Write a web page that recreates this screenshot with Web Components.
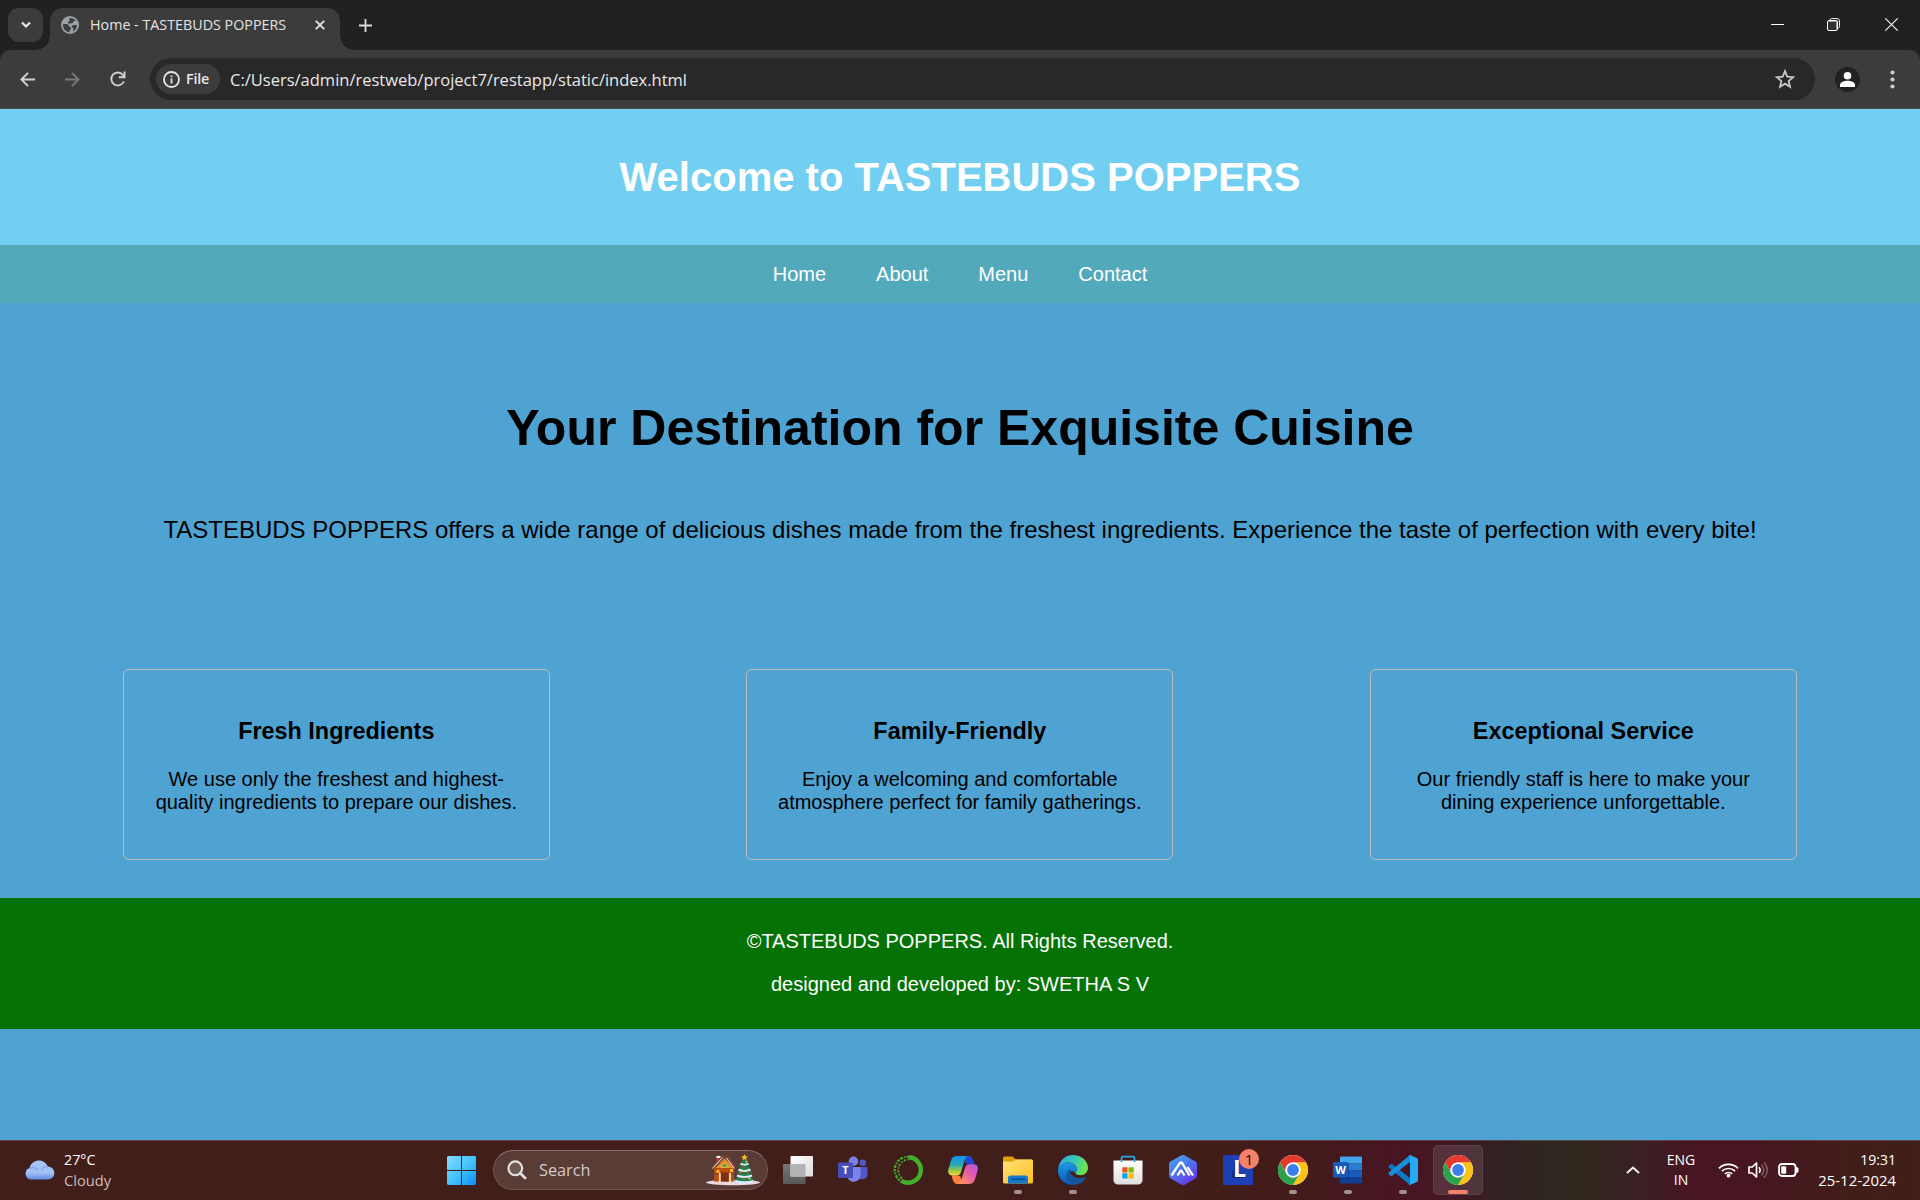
<!DOCTYPE html>
<html lang="en"><head><meta charset="utf-8"><title>Home - TASTEBUDS POPPERS</title>
<style>
html,body{margin:0;height:1200px;overflow:hidden;background:#4fa3d2}
body{display:flex;flex-direction:column;font-family:"Liberation Sans",Arial,sans-serif}
site-page{flex:1}
</style></head>
<body>
<browser-chrome></browser-chrome>
<site-page>
  <site-header>Welcome to TASTEBUDS POPPERS</site-header>
  <site-nav><span>Home</span><span>About</span><span>Menu</span><span>Contact</span></site-nav>
  <hero-banner><span slot="title">Your Destination for Exquisite Cuisine</span>TASTEBUDS POPPERS offers a wide range of delicious dishes made from the freshest ingredients. Experience the taste of perfection with every bite!</hero-banner>
  <feature-row>
    <feature-card><span slot="title">Fresh Ingredients</span>We use only the freshest and highest-<br>quality ingredients to prepare our dishes.</feature-card>
    <feature-card><span slot="title">Family-Friendly</span>Enjoy a welcoming and comfortable<br>atmosphere perfect for family gatherings.</feature-card>
    <feature-card><span slot="title">Exceptional Service</span>Our friendly staff is here to make your<br>dining experience unforgettable.</feature-card>
  </feature-row>
  <site-footer><span>©TASTEBUDS POPPERS. All Rights Reserved.</span><span>designed and developed by: SWETHA S V</span></site-footer>
</site-page>
<task-bar></task-bar>
<script>
const chromeLogo = `<circle cx="15" cy="15" r="15" fill="#fff"/>
<path fill="#e33b2e" d="M2 7.500A15 15 0 0 1 28 7.500H15A7.500 7.500 0 0 0 8.500 18.750z"/>
<path fill="#fbc116" d="M28 7.500A15 15 0 0 1 15 30L21.500 18.750A7.500 7.500 0 0 0 15 7.500z"/>
<path fill="#2da24c" d="M15 30A15 15 0 0 1 2 7.500L8.500 18.750A7.500 7.500 0 0 0 21.500 18.750z"/>
<circle cx="15" cy="15" r="7.500" fill="#fff"/><circle cx="15" cy="15" r="5.900" fill="#3b7de9"/>`;

/* name: [width, height, markup] */
const ICONS = {
  chevron:[12,8,`<path d="M2 1.500l4 4 4-4" fill="none" stroke="#e8e8e8" stroke-width="2.200"/>`],
  globe:[18,18,`<circle cx="9" cy="9" r="9" fill="#9aa0a6"/><path d="M2 8.200c2.600-.3 5.600-.2 6 1.700.3 1.500 2 .6 2.200 2.100.2 1.300-1.200 1.500-1.400 2.600-.2.700-.3 1.200-.3 1.700C5 16 1.800 12.800 2 8.200zM8.500 2.200c2.500-.4 4.700.8 6.200 2.800-1.500-.1-2.500.2-2.800 1.500-.4 1.500-2.300.3-3.300 1C8 8.200 7.300 7.800 7 7 6.700 6 7.700 5.800 8.300 5.300 9 4.600 8 3.500 8.500 2.200zM11 9.600c1.600-1 3.600-.6 5-.4-.2 3-1.800 5-4 6.200.4-1.600.6-2.300 0-3.200-.6-.8-1.500-1.800-1-2.600z" fill="#3c3c3c"/>`],
  close:[10,10,`<path d="M.8.8l8.400 8.400M9.200.8L.8 9.200" stroke="#e6e6e6" stroke-width="1.800"/>`],
  plus:[13,13,`<path d="M6.500 0v13M0 6.500h13" stroke="#dcdcdc" stroke-width="1.800"/>`],
  min:[13,13,`<path d="M0 6.500h13" stroke="#fff"/>`],
  restore:[13,13,`<path d="M3 2.500V2A1.500 1.500 0 0 1 4.500.5H10A2.500 2.500 0 0 1 12.500 3v5.500A1.500 1.500 0 0 1 11 10" fill="none" stroke="#e8e8e8"/><rect x=".5" y="2.500" width="10" height="10" rx="1.500" fill="#303232" stroke="#fff"/><path d="M2 3.500h7.500V11" fill="none" stroke="#999"/>`],
  winclose:[13,13,`<path d="M.3.3l12.400 12.400M12.700.3L.3 12.700" stroke="#f4f4f4" stroke-width="1.200"/>`],
  back:[15,15,`<path d="M15 7.500H1.500M8 .8L1.400 7.500 8 14.200" fill="none" stroke="#d2d2d2" stroke-width="1.900"/>`],
  fwd:[15,15,`<path d="M0 7.500h13.500M7 .8l6.600 6.700L7 14.200" fill="none" stroke="#777" stroke-width="1.900"/>`],
  reload:[16,16,`<path d="M13.800 10.500A6.500 6.500 0 1 1 12.800 3.800L14.500 6" fill="none" stroke="#d2d2d2" stroke-width="1.900"/><path d="M14.500.5V6.300H8.800" fill="none" stroke="#d2d2d2" stroke-width="1.900"/>`],
  info:[17,17,`<circle cx="8.500" cy="8.500" r="7.500" fill="none" stroke="#e6e6e6" stroke-width="1.800"/><path d="M8.500 7.500v5M8.500 4.400v1.800" stroke="#e6e6e6" stroke-width="1.800"/>`],
  star:[20,20,`<path d="M10 2.200l2.250 5.450 5.900.48-4.500 3.850 1.380 5.750L10 14.650l-5.030 3.080 1.380-5.750-4.500-3.850 5.900-.48z" fill="none" stroke="#c8c8c8" stroke-width="1.800"/>`],
  profile:[25,25,`<circle cx="12.500" cy="12.500" r="12.500" fill="#202222"/><circle cx="12.500" cy="8.700" r="3.800" fill="#fff"/><path d="M5 20v-2c0-3 4.500-4.300 7.500-4.300S20 15 20 18v2z" fill="#fff"/>`],
  dots:[5,19,`<g fill="#ccc"><circle cx="2.500" cy="2.500" r="2.100"/><circle cx="2.500" cy="9.500" r="2.100"/><circle cx="2.500" cy="16.500" r="2.100"/></g>`],
  cloud:[31,20,`<defs><linearGradient id="a" x2="0" y2="1"><stop stop-color="#a6c7fa"/><stop offset=".65" stop-color="#a0bff5"/><stop offset="1" stop-color="#5f8ee2"/></linearGradient></defs><path d="M6.500 19.500A6 6 0 0 1 5.500 8C7 2.500 11 .5 15 .5S22.300 3 23.800 6.500A6.500 6.500 0 0 1 24 19.500z" fill="url(#a)"/><path d="M5.500 8.500c3-1.800 7-1 8.500 1.500M17.500 10.500c1-2.500 3.500-4.300 6.500-4" fill="none" stroke="#6e98e6" stroke-width="1.300" opacity=".7"/>`],
  windows:[29,30,`<defs><linearGradient id="w" gradientUnits="userSpaceOnUse" x1="0" y1="0" x2="30" y2="30"><stop stop-color="#86dcff"/><stop offset=".5" stop-color="#44c4fb"/><stop offset="1" stop-color="#0b8bf7"/></linearGradient></defs><path fill="url(#w)" d="M1 1h13v14H0V2zM15 1h13l1 1v13H15zM0 16h14v14H1l-1-1zM15 16h14v13l-1 1H15z"/>`],
  search:[20,20,`<circle cx="8.300" cy="8.300" r="6.900" fill="#8a7774" fill-opacity=".45" stroke="#e3dedd" stroke-width="2.200"/><path d="M13.300 13.300l4.800 4.800" stroke="#e3dedd" stroke-width="2.800" stroke-linecap="round"/>`],
  holiday:[54,32,`<ellipse cx="27" cy="28.500" rx="27" ry="2.800" fill="#ead8df"/><path d="M8 13h20v14.500H8z" fill="#b7500f"/><path d="M8 20h20" stroke="#83320d" stroke-width="1"/><path d="M10.500 2.500h3v7h-3z" fill="#c8322f"/><path d="M10.500 2h4v2h-4z" fill="#fff"/><path d="M18.500 4L28 14H9.500z" fill="#e8892b"/><path d="M7 13.500L17 3l5 0 7 10.500" fill="none" stroke="#744034" stroke-width="3"/><path d="M6.500 14.500L16.500 3.500M20.500 4l7.800 10.500" fill="none" stroke="#e9cfd0" stroke-width="1.100"/><path d="M14.500 13l4-4 4 4z" fill="#3e9c3b" stroke="#ffd34e" stroke-width=".7"/><path d="M15 18.500h7.500v9H15z" fill="#7c2f12"/><path d="M13.800 28v-9M24 28v-9" stroke="#f5deb6" stroke-width="1.800"/><path d="M10.500 16h3v3h-3zM24 15h3v3h-3z" fill="#ffb32f"/><path d="M38.500 3l5.500 9h-2l4 7h-2l4 8.500h-19L33 19h-2l4-7h-2z" fill="#217e49"/><path d="M34.500 9.500q4 2.500 8 0M32.500 15.500q6 3 12 0M31 21.500q7.500 3 15 0M29.500 27q9 3 18 0" fill="none" stroke="#dceaff" stroke-width="2"/><path d="M38.500 0l1 2.200 2.300.2-1.700 1.600.5 2.300-2.100-1.200-2.100 1.200.5-2.300-1.700-1.600 2.300-.2z" fill="#ffbc28"/><g fill="#f2453e"><circle cx="37" cy="12" r="1"/><circle cx="42" cy="18" r="1"/><circle cx="34" cy="19" r="1"/><circle cx="38" cy="24.500" r="1"/></g><g fill="#ffd445"><circle cx="40.500" cy="7.500" r=".9"/><circle cx="37" cy="17" r=".9"/><circle cx="43.500" cy="24.500" r="1"/></g>`],
  taskview:[30,28,`<defs><linearGradient id="t1" x2="1" y2="1"><stop stop-color="#fff"/><stop offset="1" stop-color="#ddd"/></linearGradient><linearGradient id="t2" x2="0" y2="1"><stop stop-color="#777"/><stop offset="1" stop-color="#585858"/></linearGradient></defs><rect y="8" width="22.500" height="20" rx="1" fill="url(#t2)"/><rect x="7.500" width="22.500" height="20.500" rx="1" fill="url(#t1)"/><path d="M7.500 8h15v12.500h-15z" fill="#b3b3b3"/>`],
  teams:[30,28,`<circle cx="24.700" cy="6.800" r="3.200" fill="#5059c9"/><path d="M20 11h8.500a1 1 0 0 1 1 1v6.500a5 5 0 0 1-9.500 2z" fill="#4f58c6"/><circle cx="15.500" cy="5.200" r="4.700" fill="#7b83eb"/><path d="M10 11h12.500v9a6.800 6.800 0 0 1-13 1.500z" fill="#7b83eb"/><path d="M9 9h6v13H9z" fill="#353c94" opacity=".5"/><rect y="6.500" width="15" height="15.500" rx="1.200" fill="#474eb9"/><text x="7.500" y="18" text-anchor="middle" font-family="Open Sans,sans-serif" font-weight="700" font-size="11" fill="#fff">T</text>`],
  anaconda:[30,30,`<path d="M16 2.300A12.700 12.700 0 1 1 8.500 25.800" fill="none" stroke="#43b02a" stroke-width="4.400"/><path d="M16 1.800A13.200 13.200 0 0 0 8.500 26.500" fill="none" stroke="#43b02a" stroke-width="2.200" stroke-dasharray="2.400 1.200 1.300 1.400 3 1.100"/><path d="M16 4.400A10.900 10.900 0 0 0 9 23.500" fill="none" stroke="#43b02a" stroke-width="1.800" stroke-dasharray="1.500 1.700 2.200 1.400"/>`],
  copilot:[30,28,`<defs><linearGradient id="c1" x2="0" y2="1"><stop stop-color="#1391ee"/><stop offset=".45" stop-color="#25aab8"/><stop offset=".75" stop-color="#9bc948"/><stop offset="1" stop-color="#ffd53c"/></linearGradient><linearGradient id="c2" x1="1" x2="0" y2="1"><stop stop-color="#a759f0"/><stop offset=".4" stop-color="#e357ad"/><stop offset="1" stop-color="#ff9d57"/></linearGradient></defs><path d="M16 0h4.500c3 0 4 2.200 4.800 4.500l1.200 3.700H20c-3 0-3-3-4-5z" fill="#2347d2"/><path d="M14 28H9.500c-3 0-4-2-4.800-4.500l-1.200-4H10c3 0 3 3 4 5z" fill="#ff803b"/><path d="M9.500 0H20c-2.500 1-3.500 4-4.300 7l-2.500 8.500c-.8 2.900-2 4-5 4H4.500C.5 19.500-.5 16.500.4 13.300L3 4.500C4 1.300 6 0 9.500 0z" fill="url(#c1)"/><path d="M20.500 28H10c2.500-1 3.500-4 4.300-7l2.500-8.500c.8-2.900 2-4.300 5-4.300h3.700c4 0 5 3 4.100 6.200L27 23.500c-1 3.200-3 4.500-6.500 4.500z" fill="url(#c2)"/>`],
  folder:[30,28,`<defs><linearGradient id="f" x2="1" y2="1"><stop stop-color="#ffe27a"/><stop offset="1" stop-color="#fbbd1f"/></linearGradient></defs><path d="M0 2A1.500 1.500 0 0 1 1.500.5h8L13 3.500h15A1.500 1.500 0 0 1 29.500 5v4H0z" fill="#e0a008"/><path d="M0 5.500h10L13 3.500h15.500A1.500 1.500 0 0 1 30 5v21a1.500 1.500 0 0 1-1.500 1.500h-27A1.500 1.500 0 0 1 0 26z" fill="url(#f)"/><path d="M5 27.500V22a2.500 2.500 0 0 1 2.500-2.500h15A2.500 2.500 0 0 1 25 22v5.500z" fill="#1478ce"/><path d="M9 23.300h12.500" stroke="#084b8f" stroke-width="1.500" stroke-linecap="round"/>`],
  edge:[30,30,`<defs><linearGradient id="e1" x2="1" y2=".2"><stop stop-color="#27a5e4"/><stop offset=".6" stop-color="#35c9b6"/><stop offset="1" stop-color="#70e34c"/></linearGradient><linearGradient id="e2" x2="0" y2="1"><stop stop-color="#1b9ae0"/><stop offset="1" stop-color="#0a58b8"/></linearGradient></defs><path d="M.2 13.500C1.500 5.300 7.500 0 15 0c8.500 0 15 6 15 12.800 0 4.500-3.500 7.400-7.500 7.400-3 0-5.200-1-5.200-2.200 0-1 1.500-1.500 1.500-4C18.800 10 14.500 7.500 10 7.500 5.500 7.500 2 10 .2 13.500z" fill="url(#e1)"/><path d="M0 15C.5 10.300 4.500 7.500 10 7.500c5 0 8.800 3 8.800 6.500 0 2.500-1.500 2.500-1.500 4-3-3-8-2-8 3.500 0 4 3 7.500 8 8.200-1 .2-1.700.3-2.300.3C6 30-.5 23 0 15z" fill="url(#e2)"/><path d="M12.500 13.500C5.500 18 7.500 29 17.500 29.700c4.500-.2 8.300-3 10.200-6.700.3-.7-.2-1-.8-.7-3.500 1.500-8 1.300-11-.7-3-2-4.500-5-3.400-8.100z" fill="#15569f"/>`],
  store:[30,30,`<defs><linearGradient id="s" x2="0" y2="1"><stop stop-color="#fff"/><stop offset="1" stop-color="#dedede"/></linearGradient></defs><path d="M8.500 7V2.800A1 1 0 0 1 9.500 1.700h11a1 1 0 0 1 1 1.100V7" fill="none" stroke="#29abe9" stroke-width="1.700"/><path d="M.5 5.500h29V25a4.500 4.500 0 0 1-4.500 4.500H5A4.500 4.500 0 0 1 .5 25z" fill="url(#s)"/><path d="M9.300 12.300h5.200v5.200H9.300z" fill="#f1511b"/><path d="M15.500 12.300h5.200v5.200h-5.200z" fill="#80bb03"/><path d="M9.300 18.300h5.200v5.200H9.300z" fill="#01a3ee"/><path d="M15.500 18.300h5.200v5.200h-5.200z" fill="#feb902"/><path d="M8.500 5.500v1.500M21.500 5.500v1.500" stroke="#1585c8" stroke-width="1.700"/>`],
  hex:[30,30,`<defs><linearGradient id="h" x2=".7" y2="1"><stop stop-color="#4aa7ec"/><stop offset=".5" stop-color="#4d76eb"/><stop offset="1" stop-color="#6b35e8"/></linearGradient></defs><path d="M15 0q1 0 2 .6l10.500 6q1.500.9 1.500 2.600v11.600q0 1.700-1.500 2.600l-10.500 6q-2 1.200-4 0l-10.500-6Q1 22.500 1 20.800V9.200q0-1.700 1.500-2.600l10.500-6Q14 0 15 0z" fill="url(#h)"/><path d="M3.500 20.500L11.800 8.200Q13 6.500 14.200 8.200l7.300 12.300M9.500 20.500l2.500-4q1-1.500 2 0l2.500 4M19.500 12l5.500 8.500" fill="none" stroke="#fff" stroke-width="2.300"/>`],
  ltile:[30,30,`<path fill="#1f3fb4" d="M0 0h30v30H0z"/><path d="M12 5L8.500 23h12.500l2-2H12z" fill="#122a70"/><text x="10" y="22" font-family="Open Sans,sans-serif" font-weight="700" font-size="23" fill="#fff">L</text>`],
  chrome:[30,30,chromeLogo],
  word:[30,28,`<path fill="#41a5ee" d="M7 1.500A1 1 0 0 1 8 .5h20a1 1 0 0 1 1 1v6H7z"/><path fill="#2b7cd3" d="M7 7.500h22v7H7z"/><path fill="#185abd" d="M7 14.500h22v6.500H7z"/><path fill="#103f91" d="M7 21h22v5.500a1 1 0 0 1-1 1H8a1 1 0 0 1-1-1z"/><path d="M7 7h9v16H7z" fill="#0b3276" opacity=".5"/><rect y="6" width="15" height="15.500" rx="1.200" fill="#185abd"/><text x="7.500" y="17.700" text-anchor="middle" font-family="Open Sans,sans-serif" font-weight="700" font-size="11" fill="#fff">W</text>`],
  vscode:[30,30,`<path d="M.6 11.200l2-1.900a1.200 1.200 0 0 1 1.600 0L22 23v7L.7 12.600q-.6-.7-.1-1.400z" fill="#0b79c8"/><path d="M.6 18.900l2 1.900a1.200 1.200 0 0 0 1.600 0L22 7V0L.7 17.500q-.6.700-.1 1.400z" fill="#168fd8"/><path d="M22 0l6.700 3Q30 3.600 30 5v20q0 1.400-1.300 2L22 30q-1.200.2-2-.6 2 1 2-1.400V2q0-2.400-2-1.400.8-.8 2-.6z" fill="#27a9f3"/>`],
  up:[14,8,`<path d="M1 7l6-5.500L13 7" fill="none" stroke="#f4eeee" stroke-width="2"/>`],
  wifi:[21,16,`<g fill="none" stroke="#fff" stroke-width="1.700"><path d="M1 6.300a13.500 13.500 0 0 1 19 0M3.900 9.200a9.400 9.400 0 0 1 13.200 0M6.800 12a5.300 5.300 0 0 1 7.400 0"/></g><circle cx="10.500" cy="13.700" r="1.900" fill="#fff"/>`],
  volume:[21,18,`<path d="M1 6h3.200L8.500 2v14L4.200 12H1z" fill="none" stroke="#fff" stroke-width="1.700" stroke-linejoin="round"/><path d="M11 6.200q2.300 2.800 0 5.600" fill="none" stroke="#fff" stroke-width="1.600"/><path d="M13.500 3.800q4.500 5.200 0 10.400M16 1.300q6.500 7.700 0 15.400" fill="none" stroke="#8a6068" stroke-width="1.400"/>`],
  battery:[21,14,`<rect x="1" y="1" width="16.500" height="12" rx="3" fill="none" stroke="#fff" stroke-width="1.800"/><rect x="3.200" y="3.200" width="5" height="7.600" rx="1" fill="#fff"/><path d="M18 4.500l2 .5v4l-2 .5z" fill="#fff" stroke="#fff"/>`]
};

const define = (name, css, html) => customElements.define(name, class extends HTMLElement {
  constructor(){ super(); this.attachShadow({mode:'open'}).innerHTML = `<style>${css}</style>${html}`; }
});

customElements.define('ui-icon', class extends HTMLElement {
  connectedCallback(){
    const [w,h,body] = ICONS[this.getAttribute('name')];
    const root = this.shadowRoot || this.attachShadow({mode:'open'});
    root.innerHTML = `<style>:host{display:block;flex:none}svg{display:block;overflow:visible}</style><svg width="${w}" height="${h}" viewBox="0 0 ${w} ${h}">${body}</svg>`;
  }
});

define('browser-tab', `
:host{display:flex;align-items:center;position:relative;box-sizing:border-box;width:290px;height:42px;padding:0 15px 8px 11px;border-radius:13px 13px 0 0;background:#3c3c3c;color:#e3e3e3;font-size:14.300px}
:host::before,:host::after{content:"";position:absolute;bottom:0;width:14px;height:14px}
:host::before{left:-14px;background:radial-gradient(circle at 0 0,transparent 13.500px,#3c3c3c 14px)}
:host::after{right:-14px;background:radial-gradient(circle at 100% 0,transparent 13.500px,#3c3c3c 14px)}
.t{flex:1;margin-left:11px;line-height:20px;white-space:nowrap}`,
`<ui-icon name="globe"></ui-icon><span class="t"><slot></slot></span><ui-icon name="close"></ui-icon>`);

define('address-bar', `
:host{display:flex;align-items:center;box-sizing:border-box;width:1665px;height:42px;margin-left:24px;padding:0 20px 0 6px;border-radius:21px;background:#282828;color:#e8e8e8}
.chip{display:flex;align-items:center;box-sizing:border-box;width:64px;height:30px;padding-left:7px;border-radius:15px;background:#3c3c3c;font-size:14.300px;font-weight:600;line-height:20px;letter-spacing:-.2px}
.chip span{margin:0 0 1px 6px}
.url{flex:1;margin:2px 0 0 10px;font-size:16.500px;line-height:24px}`,
`<div class="chip"><ui-icon name="info"></ui-icon><span>File</span></div><span class="url"><slot></slot></span><ui-icon name="star"></ui-icon>`);

define('browser-chrome', `
:host{display:block;height:109px;background:#202221;font-family:"Open Sans","Noto Sans",sans-serif}
.strip{display:flex;height:50px}
.drop{display:flex;align-items:center;justify-content:center;width:35px;height:34px;margin:8px 7px 0 8px;border-radius:11px;background:#3c3c3c}
browser-tab{margin-top:8px}
.new{margin:19px 0 0 19px}
.win{display:flex;margin:18px 22px 0 auto}
.restore{margin:0 45px 0 43px}
.bar{display:flex;align-items:center;box-sizing:border-box;height:59px;padding-left:20px;border-radius:11px 11px 0 0;background:#3c3c3c;border-bottom:1px solid #4b4b4b}
.fwd{margin:0 30px}
.profile{margin:0 30px 0 20px}`,
`<div class="strip"><div class="drop"><ui-icon name="chevron"></ui-icon></div><browser-tab>Home - TASTEBUDS POPPERS</browser-tab><ui-icon class="new" name="plus"></ui-icon>
<div class="win"><ui-icon name="min"></ui-icon><ui-icon class="restore" name="restore"></ui-icon><ui-icon name="winclose"></ui-icon></div></div>
<div class="bar"><ui-icon name="back"></ui-icon><ui-icon class="fwd" name="fwd"></ui-icon><ui-icon name="reload"></ui-icon>
<address-bar>C:/Users/admin/restweb/project7/restapp/static/index.html</address-bar><ui-icon class="profile" name="profile"></ui-icon><ui-icon name="dots"></ui-icon></div>`);

define('site-page', `:host{display:flex;flex-direction:column;background:#4fa3d2;color:#000}`, `<slot></slot>`);
define('site-header', `:host{display:block;box-sizing:border-box;height:136px;padding-top:45px;background:#73cff1;color:#fff;text-align:center}h1{margin:0;font-size:40px;line-height:46px}`, `<h1><slot></slot></h1>`);
define('site-nav', `:host{display:flex;justify-content:center;gap:50px;box-sizing:border-box;height:58px;padding-top:18px;background:#52a9b9;color:#fff;font-size:20px;line-height:23px}`, `<slot></slot>`);
define('hero-banner', `:host{display:block;box-sizing:border-box;height:366px;padding-top:96px;text-align:center}h1{margin:0 0 59px;font-size:50px;line-height:58px}p{margin:0;font-size:24px;line-height:28px}`, `<h1><slot name="title"></slot></h1><p><slot></slot></p>`);
define('feature-row', `:host{display:flex;justify-content:space-between;padding:0 123.200px 38px 122.800px}`, `<slot></slot>`);
define('feature-card', `:host{display:block;box-sizing:border-box;width:427px;height:191px;padding-top:48px;border:1px solid #bbb;border-radius:6px;text-align:center}h3{margin:0 0 23px;font-size:23.400px;line-height:27px}p{margin:0;font-size:20px;line-height:23px;white-space:nowrap}`, `<h3><slot name="title"></slot></h3><p><slot></slot></p>`);
define('site-footer', `:host{display:flex;flex-direction:column;align-items:center;gap:20px;box-sizing:border-box;height:131px;padding-top:32px;background:#057205;color:#fff;font-size:20px;line-height:23px}`, `<slot></slot>`);

define('task-item', `
:host{display:flex;align-items:center;justify-content:center;position:relative;width:50px;height:50px;margin:0 2.500px;border-radius:5px}
:host([active]){background:#ffffff1c;box-shadow:inset 0 0 0 1px #ffffff12}
.mark{display:none;position:absolute;bottom:1px;left:21px;width:8px;height:4px;border-radius:2px;background:#a39093}
:host([open]) .mark{display:block}
:host([active]) .mark{display:block;left:15px;width:20px;background:#f4826a}`,
`<slot></slot><i class="mark"></i><slot name="badge"></slot>`);

define('count-badge', `:host{position:absolute;left:26px;top:4px;width:20px;height:20px;border-radius:10px;background:#f4826a;color:#1c0d0a;font-size:15px;line-height:20px;text-align:center}`, `<slot></slot>`);

define('task-bar', `
:host{display:flex;align-items:center;box-sizing:border-box;height:60px;box-shadow:inset 0 1px #5b4039;color:#fff;font-family:"Open Sans","Noto Sans",sans-serif;font-size:14.300px;line-height:20px;
background:linear-gradient(90deg,#411e19 0,#411e19 1180px,#431b1a 1290px,#481522 1400px,#421824 1450px,#2f2322 1510px,#30291f 1580px,#3a2023 1640px,#481522 1690px,#481522 1740px,#421d19 1840px,#401f18 1920px)}
.weather{display:flex;align-items:center;width:423px;padding-left:24px}
.weather div,.lang,.clock{display:flex;flex-direction:column}
.weather div,.lang,.clock{margin-bottom:1px}
.weather div{margin-left:9px}
.dim{color:#c9bcba;font-size:14.700px}
.search{display:flex;align-items:center;box-sizing:border-box;width:275px;height:40px;margin:0 2.500px 0 17px;padding:0 7px 0 13px;border:1px solid #715450;border-top-color:#8b716d;border-radius:20px;background:#5a3c37;color:#d3c9c8;font-size:16.300px}
.search span{flex:1;margin-left:12px}
.up{margin:0 0 0 140.500px}
.lang{width:30px;margin-left:26px;margin-right:22px;align-items:center;font-size:14px}
.tray{display:flex;align-items:center;gap:9px}
.clock{margin-left:auto;margin-right:24px;align-items:flex-end}
.time{font-size:14px}.date{font-size:14.900px}`,
`<div class="weather"><ui-icon name="cloud"></ui-icon><div><span>27°C</span><span class="dim">Cloudy</span></div></div>
<ui-icon name="windows"></ui-icon>
<div class="search"><ui-icon name="search"></ui-icon><span>Search</span><ui-icon name="holiday"></ui-icon></div>
<task-item><ui-icon name="taskview"></ui-icon></task-item>
<task-item><ui-icon name="teams"></ui-icon></task-item>
<task-item><ui-icon name="anaconda"></ui-icon></task-item>
<task-item><ui-icon name="copilot"></ui-icon></task-item>
<task-item open><ui-icon name="folder"></ui-icon></task-item>
<task-item open><ui-icon name="edge"></ui-icon></task-item>
<task-item><ui-icon name="store"></ui-icon></task-item>
<task-item><ui-icon name="hex"></ui-icon></task-item>
<task-item><ui-icon name="ltile"></ui-icon><count-badge slot="badge">1</count-badge></task-item>
<task-item open><ui-icon name="chrome"></ui-icon></task-item>
<task-item open><ui-icon name="word"></ui-icon></task-item>
<task-item open><ui-icon name="vscode"></ui-icon></task-item>
<task-item active><ui-icon name="chrome"></ui-icon></task-item>
<ui-icon class="up" name="up"></ui-icon>
<div class="lang"><span>ENG</span><span>IN</span></div>
<div class="tray"><ui-icon name="wifi"></ui-icon><ui-icon name="volume"></ui-icon><ui-icon name="battery"></ui-icon></div>
<div class="clock"><span class="time">19:31</span><span class="date">25-12-2024</span></div>`);
</script>
</body></html>
